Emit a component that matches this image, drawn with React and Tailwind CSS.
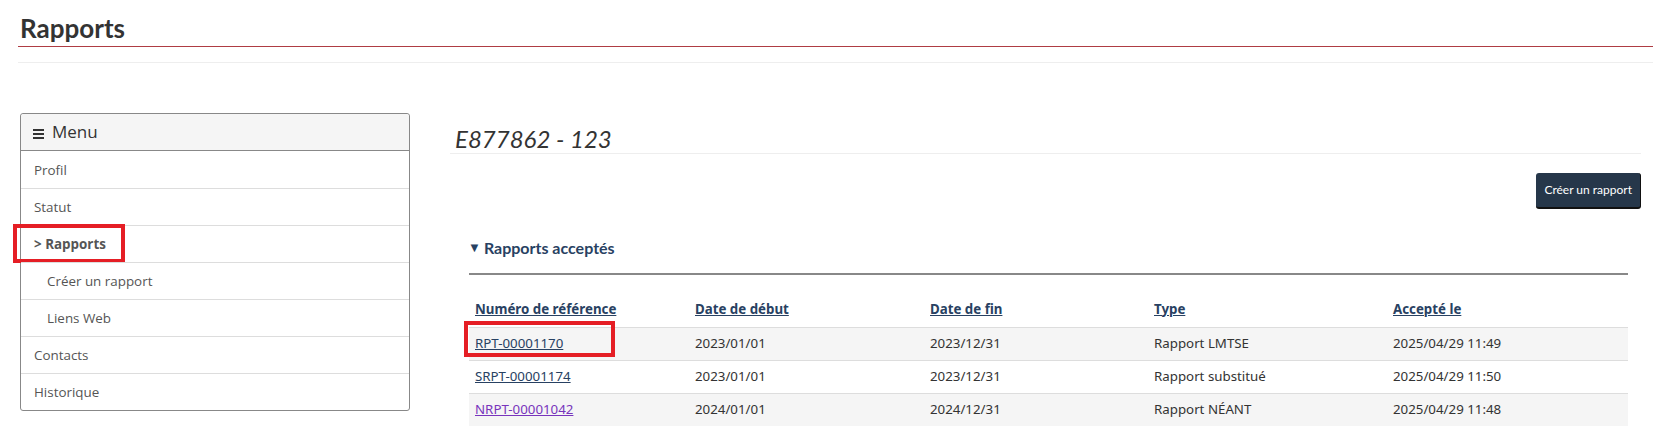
const menuItems = [
  { label: "Profil" },
  { label: "Statut" },
  { label: "> Rapports", active: true },
  { label: "Créer un rapport", sub: true },
  { label: "Liens Web", sub: true },
  { label: "Contacts" },
  { label: "Historique" },
];

const rows = [
  { ref: "RPT-00001170", start: "2023/01/01", end: "2023/12/31", type: "Rapport LMTSE", accepted: "2025/04/29 11:49", marked: true },
  { ref: "SRPT-00001174", start: "2023/01/01", end: "2023/12/31", type: "Rapport substitué", accepted: "2025/04/29 11:50" },
  { ref: "NRPT-00001042", start: "2024/01/01", end: "2024/12/31", type: "Rapport NÉANT", accepted: "2025/04/29 11:48", visited: true },
];

const cols = "grid grid-cols-[220px_235px_224px_239px_240px]";

const App = () => {
  return (
    <div className="w-[1653px] h-[441px] overflow-hidden bg-white font-['Lato',sans-serif] text-[#333]">
      {/* page title */}
      <div className="pl-[18px] pt-3">
        <h1 className="pl-[2px] pb-[2px] text-[26px] leading-[32px] font-bold border-b border-[#af3c43]">
          Rapports
        </h1>
        <div className="mt-[15px] border-b border-[#eee]" />
      </div>

      <div className="flex items-start pl-5 pr-3 mt-[50px]">
        {/* side menu */}
        <aside className="w-[390px] shrink-0 border border-[#888] rounded-[3px] font-['Open_Sans',sans-serif]">
          <div className="h-[37px] flex items-center gap-[8px] pl-[12px] bg-[#f5f5f5] border-b border-[#888] rounded-t-[3px]">
            <svg width="11" height="10" viewBox="0 0 11 10" className="mt-[4px]">
              <rect x="0" y="0" width="11" height="2" fill="#333" />
              <rect x="0" y="4" width="11" height="2" fill="#333" />
              <rect x="0" y="8" width="11" height="2" fill="#333" />
            </svg>
            <span className="text-[17px] text-[#333]">Menu</span>
          </div>
          {menuItems.map((item, i) => (
            <div
              key={i}
              className={
                "relative h-[37px] flex items-center text-[13.4px] text-[#555] pt-[1px] " +
                (i > 0 ? "border-t border-[#ddd] " : "") +
                (item.sub ? "pl-[26px]" : "pl-[13px]")
              }
            >
              <span className={item.active ? "font-bold" : ""}>{item.label}</span>
              {item.active && (
                <div className="absolute -left-[8px] -top-[2px] w-[112px] h-[39px] border-4 border-[#e51e25]" />
              )}
            </div>
          ))}
        </aside>

        {/* main content */}
        <main className="flex-1 ml-10">
          <h2 className="mt-[12px] h-[29px] pl-[5px] text-[24px] leading-[28px] italic border-b border-[#eee]">
            E877862 - 123
          </h2>

          <div className="flex justify-end mt-[19px]">
            <button className="h-[36px] px-[8px] bg-[#26374a] text-white text-[12px] rounded-[3px] border-b-2 border-r border-[#111]">
              Créer un rapport
            </button>
          </div>

          <div className="ml-[19px] mr-[13px]">
            <div className="mt-[27px] pb-[13px] border-b-2 border-[#888]">
              <div className="flex items-center h-[24px] -ml-[1px] text-[#284162] font-bold text-[16px]">
                <span className="text-[13px] mr-[3px] text-[#284162]">▼</span>
                Rapports acceptés
              </div>
            </div>

            <div className="mt-[17px] font-['Noto_Sans',sans-serif] text-[13.3px]">
              <div className={cols + " h-[35px] items-center font-bold text-[#284162]"}>
                <span className="px-[6px] underline">Numéro de référence</span>
                <span className="px-[6px] underline">Date de début</span>
                <span className="px-[6px] underline">Date de fin</span>
                <span className="px-[6px] underline">Type</span>
                <span className="px-[6px] underline">Accepté le</span>
              </div>
              {rows.map((r, i) => (
                <div
                  key={r.ref}
                  className={
                    cols +
                    " h-[33px] items-center border-t border-[#ddd] text-[#333] " +
                    (i % 2 === 0 ? "bg-[#f5f5f5]" : "bg-white")
                  }
                >
                  <span className="relative px-[6px]">
                    <span className={"underline " + (r.visited ? "text-[#7834bc]" : "text-[#284162]")}>{r.ref}</span>
                    {r.marked && (
                      <div className="absolute -left-[5px] -top-[13px] w-[151px] h-[36px] border-4 border-[#e51e25]" />
                    )}
                  </span>
                  <span className="px-[6px]">{r.start}</span>
                  <span className="px-[6px]">{r.end}</span>
                  <span className="px-[6px]">{r.type}</span>
                  <span className="px-[6px]">{r.accepted}</span>
                </div>
              ))}
            </div>
          </div>
        </main>
      </div>
    </div>
  );
};

export default App;
